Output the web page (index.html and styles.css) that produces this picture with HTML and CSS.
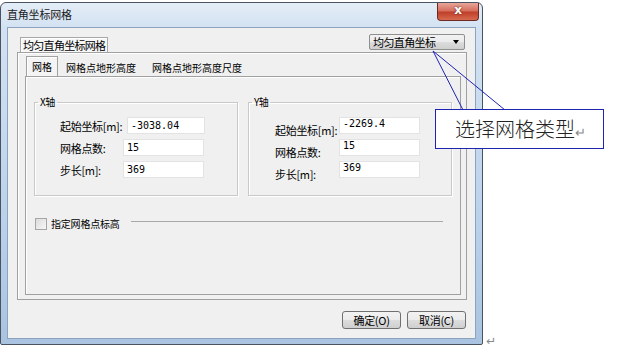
FILE: index.html
```
<!DOCTYPE html>
<html lang="zh">
<head>
    <meta charset="UTF-8">
    <title>直角坐标网格</title>
    <link rel="stylesheet" href="styles.css">
</head>
<body>
    <div class="window">
        <div class="titlebar">
            <span class="title">直角坐标网格</span>
            <span class="close">x</span>
        </div>
        <div class="client">
            <div class="outer-head">
                <span class="outer-tab">均匀直角坐标网格</span>
                <div class="combo">
                    <span>均匀直角坐标</span>
                    <span class="combo-arrow"></span>
                </div>
            </div>
            <div class="outer-panel">
                <div class="inner-tabs">
                    <span class="tab active">网格</span>
                    <span class="tab">网格点地形高度</span>
                    <span class="tab">网格点地形高度尺度</span>
                </div>
                <div class="inner-panel">
                    <div class="groups">
                        <fieldset class="group group-x">
                            <legend>X轴</legend>
                            <div class="row"><label>起始坐标[m]:</label><span class="input wide">-3038.04</span></div>
                            <div class="row"><label>网格点数:</label><span class="input">15</span></div>
                            <div class="row"><label>步长[m]:</label><span class="input">369</span></div>
                        </fieldset>
                        <fieldset class="group group-y">
                            <legend>Y轴</legend>
                            <div class="row"><label>起始坐标[m]:</label><span class="input">-2269.4</span></div>
                            <div class="row"><label>网格点数:</label><span class="input">15</span></div>
                            <div class="row"><label>步长[m]:</label><span class="input">369</span></div>
                        </fieldset>
                    </div>
                    <div class="check-row">
                        <span class="checkbox"></span>
                        <span class="check-label">指定网格点标高</span>
                        <span class="check-line"></span>
                    </div>
                </div>
            </div>
            <div class="buttons">
                <span class="btn">确定(<u>O</u>)</span>
                <span class="btn">取消(<u>C</u>)</span>
            </div>
        </div>
    </div>
    <span class="para-mark">↵</span>

    <svg class="pointer" width="621" height="350" viewBox="0 0 621 350">
        <line x1="433" y1="51" x2="463" y2="110" stroke="#1f24b0" stroke-width="1"/>
        <line x1="433" y1="51" x2="505" y2="110" stroke="#1f24b0" stroke-width="1"/>
    </svg>
    <div class="callout">选择网格类型<span class="mark">↵</span></div>
</body>
</html>
```

FILE: styles.css
```
body {
    margin: 0;
    width: 621px;
    height: 350px;
    background: #fff;
    font-family: "Noto Sans CJK SC", "DejaVu Sans", sans-serif;
    font-size: 12px;
    color: #000;
    position: relative;
    overflow: hidden;
}
.window {
    margin-top: 2px;
    width: 483px;
    height: 343px;
    box-sizing: border-box;
    border: 1px solid #4a5461;
    border-radius: 6px 6px 2px 2px;
    background: linear-gradient(180deg, #e4edf7 0%, #d3e2f2 24px, #bcd3ec 60%, #a9c3e0 100%);
    padding: 0 6px 5px 6px;
    display: flex;
    flex-direction: column;
}
.titlebar {
    height: 24px;
    display: flex;
    align-items: flex-start;
    justify-content: space-between;
}
.title {
    margin-top: 3px;
    font-size: 11px;
    color: #1a1a1a;
    letter-spacing: -0.2px;
}
.close {
    width: 40px;
    height: 17px;
    margin-right: -3px;
    border: 1px solid #6d2a24;
    border-top: none;
    border-radius: 0 0 4px 4px;
    background: linear-gradient(180deg, #e7a69a 0%, #d5705f 45%, #c0402b 55%, #d66a4e 100%);
    color: #fff;
    font: bold 12px "DejaVu Sans", sans-serif;
    text-align: center;
    line-height: 15px;
    text-shadow: 0 0 2px #5a1a10;
}
.client {
    flex: 1;
    background: #f0f0f0;
    border: 1px solid #8ba3bf;
    padding: 5px 8px 0 9px;
    display: flex;
    flex-direction: column;
}
.outer-head {
    display: flex;
    align-items: flex-end;
    justify-content: space-between;
    height: 19px;
}
.outer-tab {
    margin-left: 3px;
    padding: 0 2px;
    height: 14px;
    line-height: 14px;
    border: 1px solid #a8a8a8;
    border-bottom: none;
    background: #f7f7f7;
    box-shadow: inset 1px 1px 0 #fff;
    font-size: 11px;
    letter-spacing: -0.7px;
}
.combo {
    width: 96px;
    height: 16px;
    margin: 0 2px 2px 0;
    border: 1px solid #8e8f8f;
    border-radius: 2px;
    background: linear-gradient(180deg, #f2f2f2 0%, #ebebeb 50%, #dddddd 51%, #cfcfcf 100%);
    display: flex;
    align-items: center;
    justify-content: space-between;
    padding: 0 5px 0 3px;
    box-sizing: border-box;
    font-size: 11px;
    letter-spacing: -0.6px;
}
.combo-arrow {
    width: 0;
    height: 0;
    border-left: 3px solid transparent;
    border-right: 3px solid transparent;
    border-top: 4px solid #000;
}
.outer-panel {
    height: 248px;
    box-sizing: border-box;
    border: 1px solid #a0a0a0;
    box-shadow: inset 1px 1px 0 #fff;
    padding: 4px 5px 0 7px;
}
.inner-tabs {
    display: flex;
    height: 19px;
    align-items: flex-end;
}
.tab {
    padding: 0 8px;
    height: 17px;
    line-height: 17px;
    font-size: 10px;
    letter-spacing: 0;
}
.tab.active {
    height: 19px;
    line-height: 19px;
    padding: 0 5px;
    margin-left: 1px;
    border: 1px solid #a0a0a0;
    border-bottom: none;
    background: #f4f4f4;
    box-shadow: inset 1px 1px 0 #fff;
    margin-right: 0;
}
.inner-panel {
    height: 219px;
    box-sizing: border-box;
    border: 1px solid #a0a0a0;
    box-shadow: inset 1px 1px 0 #fff;
    padding: 19px 0 0 8px;
}
.groups {
    display: flex;
    gap: 10px;
}
.group {
    width: 204px;
    height: 100px;
    box-sizing: border-box;
    margin: 0;
    border: 1px solid #c9c9c9;
    box-shadow: inset 1px 1px 0 #fff, 1px 1px 0 #fff;
    padding: 9px 0 0 25px;
    min-width: 0;
}
.group legend {
    margin-left: -22px;
    padding: 0 2px;
    font-size: 10px;
    letter-spacing: -0.5px;
    line-height: 12px;
}
.row {
    display: flex;
    align-items: center;
    height: 17px;
    margin-bottom: 5px;
}
.row label {
    width: 63px;
    font-size: 11px;
    letter-spacing: -0.3px;
}
.group-y .row label {
    width: 64px;
    margin-top: 9px;
    margin-left: 1px;
}
.input {
    width: 81px;
    height: 17px;
    box-sizing: border-box;
    background: #fff;
    border: 1px solid #e3e3e3;
    padding-left: 3px;
    font: 10px "DejaVu Sans Mono", monospace;
    line-height: 15px;
}
.input.wide {
    margin-left: 4px;
    width: 78px;
}
.group-y .input {
    line-height: 12px;
}
.check-row {
    display: flex;
    align-items: center;
    margin-top: 20px;
    padding-left: 1px;
}
.checkbox {
    width: 10px;
    height: 10px;
    border: 1px solid #a6a6a6;
    background: linear-gradient(135deg, #dcdcdc, #f6f6f6);
}
.check-label {
    margin-left: 4px;
    font-size: 10px;
    letter-spacing: -0.2px;
}
.check-line {
    width: 312px;
    margin-left: 11px;
    border-top: 1px solid #a8a8a8;
    margin-top: -5px;
}
.buttons {
    display: flex;
    justify-content: flex-end;
    gap: 6px;
    margin-top: 11px;
    padding-right: 1px;
}
.btn {
    width: 59px;
    height: 18px;
    box-sizing: border-box;
    border: 1px solid #707070;
    border-radius: 3px;
    background: linear-gradient(180deg, #f2f2f2 0%, #ebebeb 50%, #dddddd 51%, #cfcfcf 100%);
    text-align: center;
    line-height: 16px;
    font-size: 11px;
    letter-spacing: -0.3px;
}
.btn u {
    text-decoration: none;
}
.para-mark {
    position: absolute;
    left: 486px;
    top: 331px;
    color: #888;
    font-size: 12px;
}
.pointer {
    position: absolute;
    left: 0;
    top: 0;
}
.callout {
    position: absolute;
    left: 435px;
    top: 109px;
    width: 169px;
    height: 40px;
    box-sizing: border-box;
    background: #fff;
    border: 1px solid #1f24b0;
    padding-left: 19px;
    line-height: 38px;
    font-family: "Noto Sans CJK SC", serif;
    font-weight: 300;
    font-size: 20px;
    color: #222;
}
.callout .mark {
    font-size: 13px;
    color: #888;
}
```
